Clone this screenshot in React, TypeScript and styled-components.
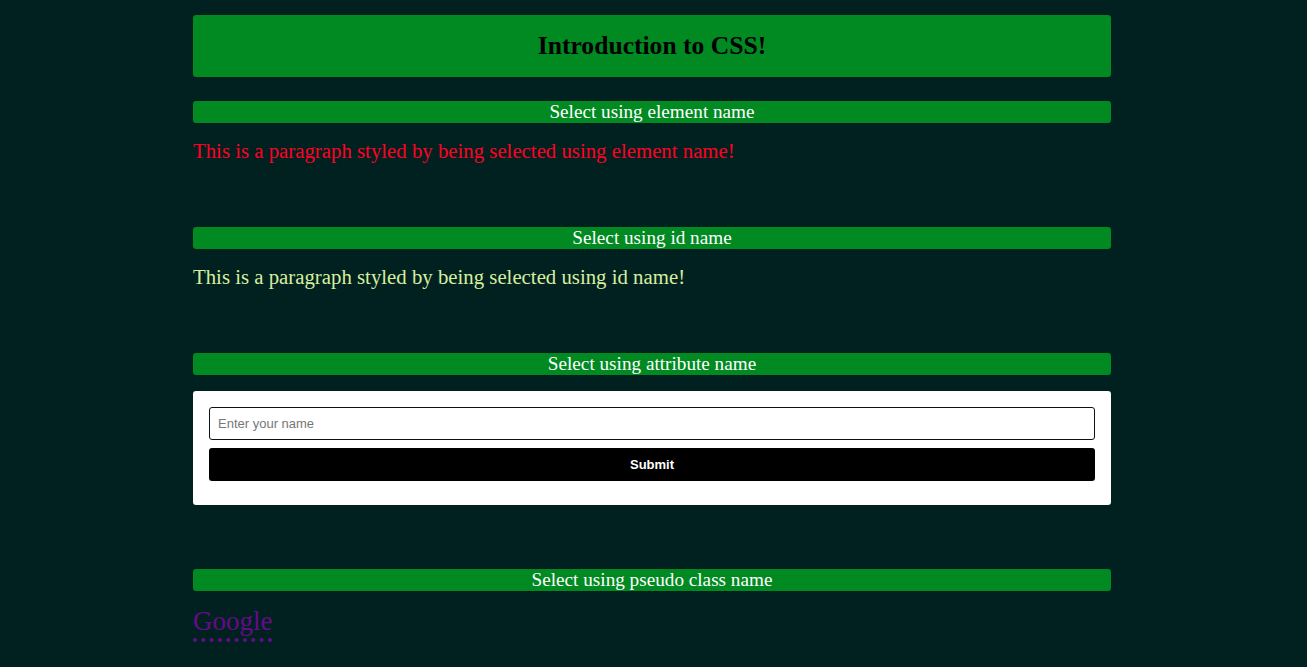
import React from "react";
import styled, { createGlobalStyle } from "styled-components";

const Global = createGlobalStyle`
  html, body { margin: 0; padding: 0; background: #012121; }
  body { font-family: "Liberation Serif", "Times New Roman", serif; }
`;

const Page = styled.div`
  width: 918px;
  margin-left: 193px;
  padding-top: 15px;
  padding-bottom: 20px;
  display: flex;
  flex-direction: column;
`;

const Header = styled.h1`
  margin: 0 0 24px;
  height: 62px;
  background: #008a21;
  border-radius: 3px;
  display: flex;
  align-items: center;
  justify-content: center;
  font-size: 25.6px;
  font-weight: bold;
  color: #000;
`;

const Section = styled.section`
  display: flex;
  flex-direction: column;
  margin-bottom: 64px;
  &:last-child { margin-bottom: 0; }
`;

const Bar = styled.h2`
  margin: 0;
  height: 22px;
  line-height: 22px;
  background: #008a21;
  border-radius: 3px;
  text-align: center;
  font-size: 19.2px;
  font-weight: normal;
  color: #fff;
`;

const Para = styled.p<{ $color: string }>`
  margin: 16px 0 0;
  font-size: 20.8px;
  line-height: 24px;
  color: ${(p) => p.$color};
`;

const Form = styled.form`
  margin-top: 16px;
  background: #fff;
  border-radius: 3px;
  padding: 16px 16px 24px;
  display: flex;
  flex-direction: column;
  gap: 8px;
`;

const Input = styled.input`
  box-sizing: border-box;
  height: 33px;
  border: 1px solid #111;
  border-radius: 3px;
  padding: 0 8px;
  font-family: "Liberation Sans", Arial, sans-serif;
  font-size: 13px;
  &::placeholder { color: #777; }
`;

const Button = styled.button`
  height: 33px;
  border: none;
  border-radius: 3px;
  background: #000;
  color: #fff;
  font-family: "Liberation Sans", Arial, sans-serif;
  font-size: 13px;
  font-weight: bold;
`;

const LinkWrap = styled.div`
  margin-top: 15px;
`;

const GLink = styled.a`
  font-size: 27px;
  line-height: 31px;
  padding-bottom: 2px;
  color: #660a8c;
  text-decoration: none;
  border-bottom: 4px dotted #660a8c;
`;

export default function App() {
  return (
    <>
      <Global />
      <Page>
        <Header>Introduction to CSS!</Header>
        <Section>
          <Bar>Select using element name</Bar>
          <Para $color="#ff0022">This is a paragraph styled by being selected using element name!</Para>
        </Section>
        <Section>
          <Bar>Select using id name</Bar>
          <Para $color="#d6ef9f">This is a paragraph styled by being selected using id name!</Para>
        </Section>
        <Section>
          <Bar>Select using attribute name</Bar>
          <Form onSubmit={(e) => e.preventDefault()}>
            <Input type="text" placeholder="Enter your name" />
            <Button type="submit">Submit</Button>
          </Form>
        </Section>
        <Section>
          <Bar>Select using pseudo class name</Bar>
          <LinkWrap>
            <GLink href="#">Google</GLink>
          </LinkWrap>
        </Section>
      </Page>
    </>
  );
}
